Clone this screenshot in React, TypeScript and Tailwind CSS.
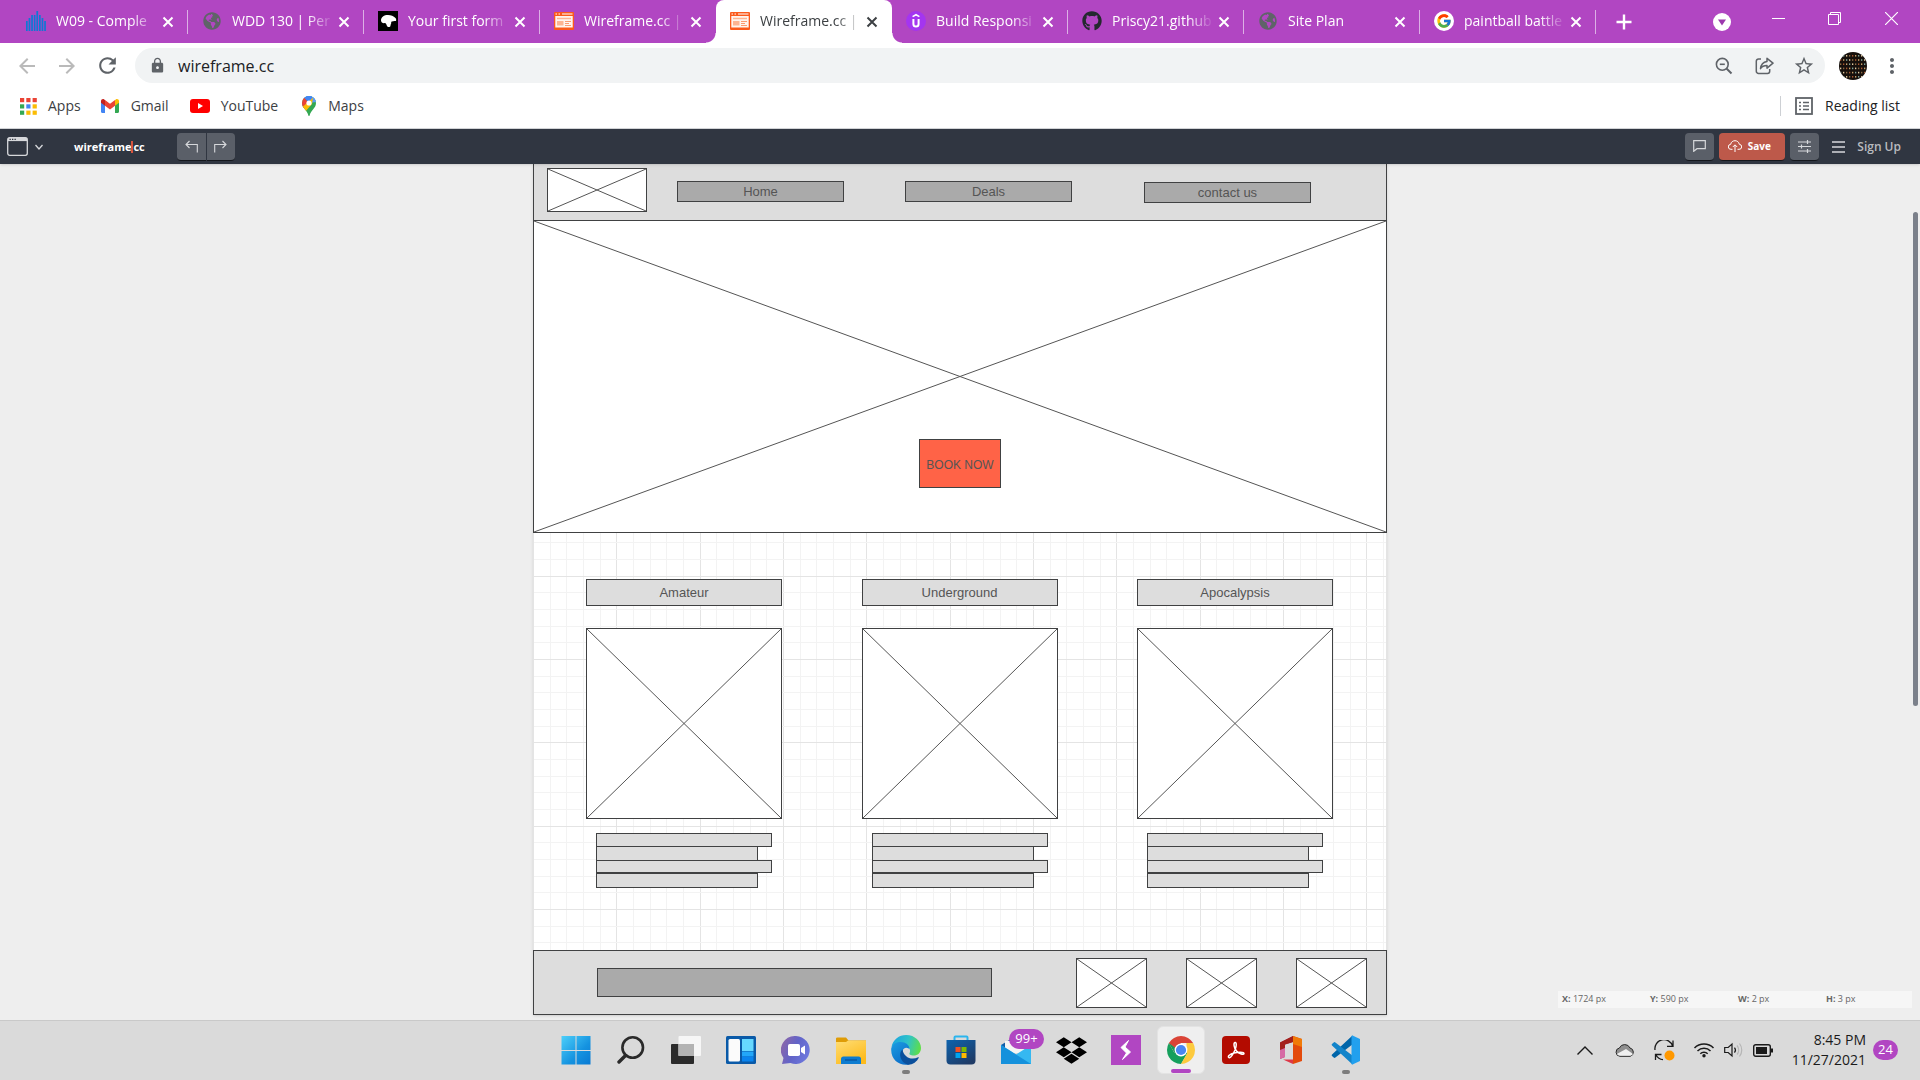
import React from "react";
import { MdArrowBack, MdArrowForward, MdRefresh, MdLock, MdStarBorder, MdMoreVert } from "react-icons/md";
import { FaGithub, FaDropbox, FaGlobeAmericas } from "react-icons/fa";
import { FcGoogle } from "react-icons/fc";

/* ---------- Favicons ---------- */

function BarsIcon() {
  const tops = [10, 7, 4, 4, 0, 4, 7, 10, 11];
  return (
    <svg width="20" height="20" viewBox="0 0 20 20" aria-hidden="true">
      {tops.slice(0, 8).map((t, i) => (
        <rect key={i} x={i * 2.6} y={t} width="1.700" height={20 - t} fill="#0f78d4" />
      ))}
    </svg>
  );
}

function FormIcon() {
  return (
    <svg width="20" height="20" viewBox="0 0 20 20" aria-hidden="true">
      <rect width="20" height="20" fill="#000" />
      <path d="M3 9.500c0-3.500 3-5.500 7-5.500 3 0 5.500 1 7.500 3 .8.800.8 2 .5 3-2 0-4 0-5 1 1 1-.5 2-.5 3.500 0 1.500-2.500 2.500-3.500.5-.7-1.300-.5-2.500-2-3-2 .5-4-.5-4-2.500z" fill="#fff" />
    </svg>
  );
}

function WireframeIcon() {
  return (
    <svg width="20" height="18" viewBox="0 0 20 18" aria-hidden="true">
      <rect x="0" y="0" width="20" height="18" rx="1" fill="#fb5a1c" />
      <path d="M1.500 2h1.500M4.500 2h1.500M8 2h10.500" stroke="#fff" strokeWidth="1" />
      <rect x="1.300" y="4" width="17.400" height="11.500" fill="#fff4ee" />
      <path d="M3 6.500h14" stroke="#fdb492" strokeWidth="1.500" />
      <rect x="3" y="9" width="6.500" height="4.500" fill="#fdb492" />
      <path d="M11 9.500h6M11 11.500h4M11 13.500h6" stroke="#fb9a70" strokeWidth="1" />
    </svg>
  );
}

function UIcon() {
  return (
    <svg width="20" height="20" viewBox="0 0 20 20" aria-hidden="true">
      <circle cx="10" cy="10" r="10" fill="#a435f0" />
      <path d="M6.600 5.600L10 3.700l3.400 1.900" fill="none" stroke="#fff" strokeWidth="1.600" />
      <path d="M7.400 8v5a2.600 2.600 0 005.200 0V8" fill="none" stroke="#fff" strokeWidth="2" />
    </svg>
  );
}

/* ---------- Browser tabs ---------- */

type TabInfo = { title: string; icon: React.ReactNode; active?: boolean; noSeparator?: boolean };

const globe = <FaGlobeAmericas size={18} color="#5f6368" />;

const tabs: TabInfo[] = [
  { title: "W09 - Comple", icon: <BarsIcon /> },
  { title: "WDD 130 | Per", icon: globe },
  { title: "Your first form", icon: <FormIcon /> },
  { title: "Wireframe.cc |", icon: <WireframeIcon />, noSeparator: true },
  { title: "Wireframe.cc |", icon: <WireframeIcon />, active: true, noSeparator: true },
  { title: "Build Responsi", icon: <UIcon /> },
  { title: "Priscy21.github", icon: <FaGithub size={20} color="#24292f" /> },
  { title: "Site Plan", icon: globe },
  {
    title: "paintball battle",
    icon: (
      <span className="flex size-5 items-center justify-center rounded-full bg-white">
        <FcGoogle size={16} />
      </span>
    ),
  },
];

function Tab({ title, icon, active, noSeparator }: TabInfo) {
  return (
    <div
      className={
        active
          ? "relative flex h-full w-44 shrink-0 items-center rounded-t-lg bg-white text-[#3c4043]"
          : "flex h-full w-44 shrink-0 items-center text-white"
      }
    >
      {active && (
        <>
          <span className="absolute bottom-0 -left-2.5 size-2.5 bg-[radial-gradient(circle_at_0_0,transparent_9px,#fff_10px)]" />
          <span className="absolute bottom-0 -right-2.5 size-2.5 bg-[radial-gradient(circle_at_100%_0,transparent_9px,#fff_10px)]" />
        </>
      )}
      <button className="flex min-w-0 flex-1 items-center gap-2.5 pb-0.5 pl-3.5">
        <span className="flex size-5 shrink-0 items-center justify-center">{icon}</span>
        <span className="w-[102px] text-left text-sm whitespace-nowrap [mask-image:linear-gradient(to_right,#000_74%,transparent)]">
          {title}
        </span>
      </button>
      <button aria-label={`Close ${title}`} className="mr-1 flex h-5 w-4 shrink-0 items-center justify-center">
        <svg width="12" height="12" viewBox="0 0 12 12" stroke="currentColor" strokeWidth="2">
          <path d="M1.500 1.500l9 9M10.500 1.500l-9 9" />
        </svg>
      </button>
      <span className={noSeparator ? "ml-[7px] h-6 w-px" : "ml-[7px] h-6 w-px bg-[#dcb0e5]"} />
    </div>
  );
}

function TabStrip() {
  return (
    <div className="flex h-[43px] bg-[#b146c2] pl-3">
      {tabs.map((t, i) => (
        <Tab key={i} {...t} />
      ))}
      <button aria-label="New tab" className="ml-5 flex items-center text-white">
        <svg width="16" height="16" viewBox="0 0 16 16" stroke="currentColor" strokeWidth="2.400">
          <path d="M8 0.500v15M0.500 8h15" />
        </svg>
      </button>
      <div className="ml-auto flex text-white">
        <button aria-label="Search tabs" className="flex w-14 items-center justify-center">
          <svg width="18" height="18" viewBox="0 0 18 18">
            <circle cx="9" cy="9" r="9" fill="#fff" />
            <path d="M5 6.500h8L9 12.500z" fill="#9c38ad" />
          </svg>
        </button>
        <button aria-label="Minimize" className="flex w-14 justify-center pt-3">
          <svg width="13" height="13" viewBox="0 0 13 13" stroke="currentColor" fill="none">
            <path d="M0 6.500h13" />
          </svg>
        </button>
        <button aria-label="Restore" className="flex w-14 justify-center pt-3">
          <svg width="13" height="13" viewBox="0 0 13 13" stroke="currentColor" fill="none">
            <path d="M0.500 2.500h10v10h-10zM2.500 2.500v-2h10v10h-2" />
          </svg>
        </button>
        <button aria-label="Close window" className="flex w-[58px] justify-center pt-3">
          <svg width="13" height="13" viewBox="0 0 13 13" stroke="currentColor" fill="none" strokeWidth="1.200">
            <path d="M0 0l13 13M13 0L0 13" />
          </svg>
        </button>
      </div>
    </div>
  );
}

/* ---------- Address bar ---------- */

function Avatar() {
  const lamps: React.ReactNode[] = [];
  const colors = ["#c9a26a", "#e0c9a0", "#a8552f", "#7fa39b", "#8d6a45"];
  for (let r = 0; r < 6; r++) {
    for (let c = 0; c < 9; c++) {
      lamps.push(<rect key={`${r}-${c}`} x={1 + c * 3} y={3 + r * 4.2} width="1.300" height="1.600" fill={colors[(r * 7 + c * 3) % 5]} />);
    }
  }
  return (
    <svg width="28" height="28" viewBox="0 0 28 28" className="rounded-full bg-[#17100c]" aria-hidden="true">
      {lamps}
    </svg>
  );
}

function AddressBar() {
  return (
    <div className="flex h-[45px] items-center bg-white pl-[7px] text-[#5f6368]">
      <button aria-label="Back" className="flex w-10 justify-center text-[#bababa]">
        <MdArrowBack size={24} />
      </button>
      <button aria-label="Forward" className="flex w-10 justify-center text-[#bababa]">
        <MdArrowForward size={24} />
      </button>
      <button aria-label="Reload" className="flex w-10 justify-center">
        <MdRefresh size={25} />
      </button>
      <div className="ml-2 flex h-[35px] flex-1 items-center rounded-full bg-[#f1f3f4] pr-px">
        <MdLock size={17} className="ml-3.5" />
        <input
          aria-label="Address"
          defaultValue="wireframe.cc"
          className="ml-3 min-w-0 flex-1 bg-transparent text-base text-[#202124] outline-none"
        />
        <button aria-label="Zoom" className="flex w-10 justify-center">
          <svg width="18" height="18" viewBox="0 0 18 18" fill="none" stroke="currentColor" strokeWidth="1.600">
            <circle cx="7.300" cy="7.300" r="5.900" />
            <path d="M11.500 11.500l5 5" strokeWidth="2" />
            <path d="M4.800 7.300h5" />
          </svg>
        </button>
        <button aria-label="Share" className="flex w-10 justify-center">
          <svg width="19" height="18" viewBox="0 0 19 18" fill="none" stroke="currentColor" strokeWidth="1.500" strokeLinejoin="round">
            <path d="M6 2H3.500A2.200 2.200 0 001.300 4.200v10a2.200 2.200 0 002.200 2.200h9a2.200 2.200 0 002.200-2.200V12" />
            <path d="M12 1.300l6 4.900-6 4.900V8.600c-3 0-5 .8-6.500 3 .4-3.800 2.700-6.600 6.500-7.200z" />
          </svg>
        </button>
        <button aria-label="Bookmark this page" className="flex w-10 justify-center">
          <MdStarBorder size={22} />
        </button>
      </div>
      <button aria-label="Profile" className="ml-3.5">
        <Avatar />
      </button>
      <button aria-label="Menu" className="mr-4 ml-[13px] flex w-6 justify-center">
        <MdMoreVert size={24} />
      </button>
    </div>
  );
}

/* ---------- Bookmarks ---------- */

function AppsGrid() {
  const c = ["#ea4335", "#ea4335", "#ea4335", "#34a853", "#4285f4", "#fbbc04", "#34a853", "#fbbc04", "#fbbc04"];
  return (
    <svg width="17" height="17" viewBox="0 0 17 17" aria-hidden="true">
      {c.map((f, i) => (
        <rect key={i} x={(i % 3) * 6.3} y={Math.floor(i / 3) * 6.3} width="4.200" height="4.200" fill={f} />
      ))}
    </svg>
  );
}

function GmailIcon() {
  return (
    <svg width="18" height="14" viewBox="0 0 18 14" aria-hidden="true">
      <path d="M0 2v10.800C0 13.500.5 14 1.200 14H4V5z" fill="#4285f4" />
      <path d="M18 2v10.800c0 .7-.5 1.200-1.200 1.200H14V5z" fill="#34a853" />
      <path d="M14 .9V6.800l4-3V2c0-1.600-1.800-2.500-3.200-1.600z" fill="#fbbc04" />
      <path d="M4 6.800V1l5 3.700L14 1v5.800l-5 3.700z" fill="#ea4335" />
      <path d="M0 2v1.800l4 3V.9L3.200.4C1.800-.5 0 .4 0 2z" fill="#c5221f" />
    </svg>
  );
}

function YouTubeIcon() {
  return (
    <svg width="20" height="14" viewBox="0 0 20 14" aria-hidden="true">
      <rect width="20" height="14" rx="3" fill="#f00" />
      <path d="M8 4v6l5-3z" fill="#fff" />
    </svg>
  );
}

function MapsIcon() {
  return (
    <svg width="14" height="20" viewBox="0 0 14 20" aria-hidden="true">
      <defs>
        <clipPath id="pin">
          <path d="M7 0a7 7 0 00-7 7c0 3 1.500 4.600 3 6.500C4.800 15.800 5.800 17 6.300 19.300c.2 1 1.200 1 1.400 0C8.200 17 9.200 15.800 11 13.500c1.500-1.900 3-3.500 3-6.500a7 7 0 00-7-7z" />
        </clipPath>
      </defs>
      <g clipPath="url(#pin)">
        <rect width="14" height="20" fill="#34a853" />
        <path d="M0 0h14v5L9 5 2 3z" fill="#4285f4" />
        <path d="M10 0l4 3v3L7 7z" fill="#5a9bf6" />
        <path d="M0 2l2.500 0L7 7l-6 6-1-2z" fill="#ea4335" />
        <path d="M0 11.500L11 1.500 10 8l-7 8z" fill="#fbbc04" />
        <path d="M2 1L10-2v4L6 6z" fill="#4285f4" />
      </g>
      <circle cx="7" cy="7" r="2.600" fill="#fff" />
    </svg>
  );
}

function Bookmarks() {
  return (
    <div className="flex h-[41px] items-center border-b border-[#d5d7da] bg-white pr-5 pb-1 pl-5 text-sm text-[#3c4043]">
      <a href="#apps" className="flex items-center gap-[11px]">
        <AppsGrid />
        Apps
      </a>
      <a href="#gmail" className="ml-5 flex items-center gap-3">
        <GmailIcon />
        Gmail
      </a>
      <a href="#youtube" className="ml-[21px] flex items-center gap-[11px]">
        <YouTubeIcon />
        YouTube
      </a>
      <a href="#maps" className="ml-6 flex items-center gap-3">
        <MapsIcon />
        Maps
      </a>
      <span className="ml-auto h-5 w-px bg-[#cdd0d4]" />
      <button className="ml-3.5 flex items-center gap-3 text-[#202124]">
        <svg width="18" height="18" viewBox="0 0 18 18" fill="none" stroke="#5f6368" strokeWidth="1.800" aria-hidden="true">
          <rect x="1" y="1" width="16" height="16" />
          <path d="M4 5.500h2M8 5.500h6M4 9h2M8 9h6M4 12.500h2M8 12.500h6" strokeWidth="1.500" />
        </svg>
        Reading list
      </button>
    </div>
  );
}

/* ---------- Wireframe editor bar ---------- */

const toolButton = "flex h-7 items-center justify-center border-b border-[#14171c] bg-[#5a5f68] text-[#d6d8db]";

function EditorBar() {
  return (
    <div className="relative z-10 flex h-[35px] items-center bg-[#303641] pr-[19px] pl-[7px] text-[#d6d8db] shadow-sm">
      <button aria-label="Device" className="flex items-center gap-[7px]">
        <svg width="21" height="19" viewBox="0 0 21 19" fill="none" stroke="currentColor" strokeWidth="1.300">
          <rect x="0.700" y="0.700" width="19.600" height="17.600" rx="2" />
          <path d="M1 2.500h19" strokeWidth="3.200" />
          <path d="M2.500 2.300h1.300M5 2.300h1.300M7.500 2.300h1.300" stroke="#303641" />
        </svg>
        <svg width="8" height="6" viewBox="0 0 8 6" fill="none" stroke="currentColor" strokeWidth="1.300">
          <path d="M0.500 1L4 5l3.500-4" />
        </svg>
      </button>
      <a href="#home" className="ml-[31px] flex text-[11px] leading-3 font-bold text-white">
        wireframe
        <span className="w-0.5 bg-[#d9553f]" />
        cc
      </a>
      <div className="ml-8 flex gap-px">
        <button aria-label="Undo" className={`${toolButton} w-[29px] rounded-l`}>
          <svg width="13" height="13" viewBox="0 0 13 13" fill="none" stroke="currentColor" strokeWidth="1.100">
            <path d="M4.500 1L1 4.500 4.500 8M1 4.500h11.300V12.500" />
          </svg>
        </button>
        <button aria-label="Redo" className={`${toolButton} w-7 rounded-r`}>
          <svg width="13" height="13" viewBox="0 0 13 13" fill="none" stroke="currentColor" strokeWidth="1.100">
            <path d="M8.500 1L12 4.500 8.500 8M12 4.500H0.700V12.500" />
          </svg>
        </button>
      </div>
      <div className="ml-auto flex items-center gap-[5px]">
        <button aria-label="Comments" className={`${toolButton} w-[29px] rounded`}>
          <svg width="13" height="12" viewBox="0 0 13 12" fill="none" stroke="currentColor" strokeWidth="1.200">
            <path d="M0.700 0.700h11.600v8H4L0.700 11.300z" />
          </svg>
        </button>
        <button className="flex h-7 w-[66px] items-center justify-center gap-1.5 rounded border-b border-[#14171c] bg-[#bd594a] pr-1.5 text-[10px] font-bold text-white">
          <svg width="14" height="12" viewBox="0 0 14 12" fill="none" stroke="currentColor">
            <path d="M4.500 9.300H3a2.500 2.500 0 01-.3-5C3 2 5 .7 7 .7s4 1.300 4.300 3.600a2.500 2.500 0 01-.3 5H9.500M7 12V5M4.800 7L7 4.800 9.200 7" />
          </svg>
          Save
        </button>
        <button aria-label="Settings" className={`${toolButton} w-[29px] rounded`}>
          <svg width="13" height="13" viewBox="0 0 13 13" fill="none" stroke="currentColor" strokeWidth="1.200">
            <path d="M0 2h13M0 6.500h13M0 11h13M9.500 0v4M3.500 4.500v4M9.500 9v4" />
          </svg>
        </button>
        <button aria-label="Menu" className="ml-2">
          <svg width="13" height="12" viewBox="0 0 13 12" stroke="currentColor" strokeWidth="1.400">
            <path d="M0 1h13M0 6h13M0 11h13" />
          </svg>
        </button>
        <a href="#signup" className="ml-[7px] text-xs font-semibold text-[#b9bbbf]">
          Sign Up
        </a>
      </div>
    </div>
  );
}

/* ---------- Wireframe page ---------- */

function Cross() {
  return (
    <svg className="absolute inset-0 size-full" stroke="#555" strokeWidth="1" aria-hidden="true">
      <line x1="0" y1="0" x2="100%" y2="100%" />
      <line x1="0" y1="100%" x2="100%" y2="0" />
    </svg>
  );
}

function ImageBox({ className }: { className: string }) {
  return (
    <div className={`relative border border-[#404142] bg-white ${className}`}>
      <Cross />
    </div>
  );
}

function GridLines() {
  const cols = Array.from({ length: 51 }, (_, i) => i + 1);
  const rows = Array.from({ length: 25 }, (_, i) => i);
  return (
    <svg className="absolute inset-0 size-full" shapeRendering="crispEdges" aria-hidden="true">
      {cols.map((i) => (
        <rect key={`c${i}`} x={Math.round((i * 50) / 3) - 1} y="0" width="1" height="100%" fill={i % 5 ? "#f3f3f3" : "#e4e4e4"} />
      ))}
      {rows.map((i) => (
        <rect key={`r${i}`} x="0" y={Math.round(9.3 + (i * 50) / 3)} width="100%" height="1" fill={i % 5 === 2 ? "#e4e4e4" : "#f3f3f3"} />
      ))}
    </svg>
  );
}

const navBox = "flex h-[21px] w-[167px] items-center justify-center border border-[#404142] bg-[#aaa]";
const textLine = "border border-[#404142] bg-[#ddd]";

function Column({ title }: { title: string }) {
  return (
    <div className="flex w-[196px] flex-col">
      <h2 className="flex h-[27px] items-center justify-center border border-[#404142] bg-[#ddd]">{title}</h2>
      <ImageBox className="mt-[22px] h-[191px]" />
      <div className="mt-3.5 ml-2.5 flex flex-col">
        <div className={`${textLine} h-3.5 w-44`} />
        <div className={`${textLine} -mt-px h-[15px] w-[162px]`} />
        <div className={`${textLine} -mt-px h-[13px] w-44`} />
        <div className={`${textLine} h-[15px] w-[162px]`} />
      </div>
    </div>
  );
}

function Wireframe() {
  return (
    <div className="mx-auto flex w-[854px] flex-col bg-white font-['Liberation_Sans',Arial,sans-serif] text-[13px] text-[#555] shadow-sm">
      <nav className="flex h-14 items-start border-x border-[#404142] bg-[#ddd] pl-[13px]">
        <ImageBox className="mt-1 h-11 w-[100px]" />
        <button className={`${navBox} mt-[17px] ml-[30px]`}>Home</button>
        <button className={`${navBox} mt-[17px] ml-[61px]`}>Deals</button>
        <button className={`${navBox} mt-[18px] ml-[72px]`}>contact us</button>
      </nav>
      <div className="relative flex h-[313px] justify-center border border-[#404142] bg-white pt-[218px]">
        <Cross />
        <button className="relative h-[49px] w-[82px] border border-[#404142] bg-[#ff6347] pt-0.5 text-xs whitespace-nowrap">BOOK NOW</button>
      </div>
      <div className="relative border-x border-[#e4e4e4]">
        <GridLines />
        <div className="relative flex justify-between pt-[46px] pr-[53px] pb-[62px] pl-[52px]">
          <Column title="Amateur" />
          <Column title="Underground" />
          <Column title="Apocalypsis" />
        </div>
      </div>
      <div className="flex h-[65px] items-center border border-[#404142] bg-[#ddd] pl-[63px]">
        <div className="h-[29px] w-[395px] border border-[#404142] bg-[#aaa]" />
        <div className="ml-[84px] flex gap-[39px]">
          <ImageBox className="h-[50px] w-[71px]" />
          <ImageBox className="h-[50px] w-[71px]" />
          <ImageBox className="h-[50px] w-[71px]" />
        </div>
      </div>
    </div>
  );
}

function StatusBox() {
  const items = [
    ["X:", "1724 px"],
    ["Y:", "590 px"],
    ["W:", "2 px"],
    ["H:", "3 px"],
  ];
  return (
    <div className="absolute right-2 bottom-3 grid h-[17px] w-[354px] grid-cols-[repeat(4,88px)] items-center bg-[#f6f6f6] pb-0.5 pl-1 text-[9px] leading-3 text-[#666]">
      {items.map(([k, v]) => (
        <span key={k}>
          <b>{k}</b> {v}
        </span>
      ))}
    </div>
  );
}

/* ---------- Taskbar ---------- */

function StartIcon() {
  return (
    <svg width="30" height="30" viewBox="0 0 30 30">
      <defs>
        <linearGradient id="win" gradientUnits="userSpaceOnUse" x1="0" y1="0" x2="30" y2="30">
          <stop offset="0" stopColor="#4fd2fb" />
          <stop offset="0.600" stopColor="#1593e0" />
          <stop offset="1" stopColor="#0878d2" />
        </linearGradient>
      </defs>
      <path d="M0.500 1h14v14h-14zM15.500 1h14v14h-14zM0.500 16h14v13.500h-14zM15.500 16h14v13.500h-14z" fill="url(#win)" />
    </svg>
  );
}

function SearchIcon() {
  return (
    <svg width="28" height="30" viewBox="0 0 28 30" fill="none" stroke="#2a2a2a" strokeWidth="2.600" strokeLinecap="round">
      <circle cx="15.700" cy="12.500" r="10.300" />
      <path d="M8.500 20.500L2 27" strokeWidth="3.400" />
    </svg>
  );
}

function TaskViewIcon() {
  return (
    <svg width="30" height="30" viewBox="0 0 30 30">
      <rect x="0" y="9" width="23" height="20" rx="1" fill="#2b2b2b" />
      <rect x="7.500" y="1" width="22.500" height="20" rx="1" fill="#f6f6f6" />
      <rect x="7.500" y="9" width="15.500" height="12" fill="#b3b3b3" />
    </svg>
  );
}

function WidgetsIcon() {
  return (
    <svg width="30" height="28" viewBox="0 0 30 28">
      <rect width="30" height="28" rx="1.500" fill="#0a5aa8" />
      <rect x="2.500" y="3" width="11.500" height="22.500" rx="1.500" fill="#fbfbfb" />
      <path d="M16 3h11.500v12H16z" fill="#66d8ff" />
      <path d="M16 15.500h11.500v5H16z" fill="#22a7f9" />
      <path d="M16 20.500h11.500v5H16z" fill="#0a84ee" />
    </svg>
  );
}

function ChatIcon() {
  return (
    <svg width="30" height="30" viewBox="0 0 30 30">
      <defs>
        <linearGradient id="chat" x1="0" y1="0.200" x2="1" y2="0.600">
          <stop offset="0" stopColor="#8e67a8" />
          <stop offset="0.500" stopColor="#6264c8" />
          <stop offset="1" stopColor="#6d78dd" />
        </linearGradient>
      </defs>
      <path d="M15 1a14 14 0 11-5.500 27L1 29l1.500-6A14 14 0 0115 1z" fill="url(#chat)" />
      <rect x="7" y="9" width="12" height="12" rx="1.800" fill="#fff" />
      <path d="M20 13l4-2.500v9L20 17z" fill="#fff" />
    </svg>
  );
}

function FolderIcon() {
  return (
    <svg width="30" height="27" viewBox="0 0 30 27">
      <defs>
        <linearGradient id="fold" x1="0" y1="0" x2="0.600" y2="1">
          <stop offset="0" stopColor="#ffdd75" />
          <stop offset="1" stopColor="#fdbb1d" />
        </linearGradient>
      </defs>
      <path d="M0 1.500Q0 .5 1.500.5H10l2.500 3H30V12H0z" fill="#df9c06" />
      <path d="M0 5h10l2-1.500h18V27H0z" fill="url(#fold)" />
      <path d="M5 27v-5q0-2.500 2.500-2.500h15q2.500 0 2.500 2.500v5z" fill="#0e7cd0" />
      <path d="M9 23h12" stroke="#0a58a5" strokeWidth="1.500" />
    </svg>
  );
}

function EdgeIcon() {
  return (
    <svg width="30" height="30" viewBox="0 0 30 30">
      <defs>
        <linearGradient id="edgeTop" x1="0" y1="0.500" x2="1" y2="0.700">
          <stop offset="0" stopColor="#1ca5de" />
          <stop offset="0.500" stopColor="#2fc3c8" />
          <stop offset="1" stopColor="#62e03f" />
        </linearGradient>
        <linearGradient id="edgeLeft" x1="0" y1="0" x2="0.600" y2="1">
          <stop offset="0" stopColor="#1b9de2" />
          <stop offset="1" stopColor="#0c6dc8" />
        </linearGradient>
      </defs>
      <path d="M0.500 12C2 4.500 8 0 15.200 0 24 0 30 6.500 30 13c0 5-3.600 7.500-7.200 7.500-3.300 0-5-1.300-4.300-2.300 1.400-2 .6-7.200-4.500-7.200-7 0-8-4-13.500 1z" fill="url(#edgeTop)" />
      <path d="M0.300 13C2 8.500 6 7 9.500 7c5.500 0 9.300 3.500 9 7.500-1-2.500-6.500-3-7 2C11 22 15 28 19 29.200 10 32-1 25.500 0.300 13z" fill="url(#edgeLeft)" />
      <path d="M11.500 14.500C7 18 9 27.500 17 29.800c5 0 9-3.300 10.800-7 .3-.6-.2-.8-.7-.5-7 3.500-14.600-.5-15.600-7.800z" fill="#0b4f9c" />
    </svg>
  );
}

function StoreIcon() {
  return (
    <svg width="30" height="30" viewBox="0 0 30 30">
      <defs>
        <linearGradient id="store" x1="0" y1="0" x2="0.700" y2="1">
          <stop offset="0" stopColor="#0d63ae" />
          <stop offset="1" stopColor="#1f3b66" />
        </linearGradient>
      </defs>
      <path d="M8.500 6V2.500q0-1 1-1h11q1 0 1 1V6" fill="none" stroke="#2bb5ee" strokeWidth="2" />
      <path d="M0.500 5h29v20.500q0 4-4 4h-21q-4 0-4-4z" fill="url(#store)" />
      <path d="M9.500 12h5v5h-5z" fill="#f25022" />
      <path d="M15.500 12h5v5h-5z" fill="#7fba00" />
      <path d="M9.500 18h5v5h-5z" fill="#00a4ef" />
      <path d="M15.500 18h5v5h-5z" fill="#ffb900" />
    </svg>
  );
}

function MailIcon() {
  return (
    <svg width="30" height="28" viewBox="0 0 30 28">
      <path d="M0 9L15 0l15 9v4H0z" fill="#0f5da8" />
      <path d="M4 5h22v12H4z" fill="#f4f4f4" />
      <path d="M0 9l15 9.500L30 9v19H0z" fill="#35b8f1" />
      <path d="M0 9l30 19H0z" fill="#1591dc" />
    </svg>
  );
}

function BoltIcon() {
  return (
    <svg width="30" height="30" viewBox="0 0 30 30">
      <rect width="30" height="30" fill="#b146c2" />
      <path d="M17.500 5.500L10 12.500l5.500 5.500-4 6.500 8-7.500-5.500-5z" fill="#fff" stroke="#fff" strokeWidth="1" />
    </svg>
  );
}

function ChromeIcon() {
  return (
    <svg width="28" height="28" viewBox="0 0 28 28">
      <path d="M1.880 7A14 14 0 0014 28l6.500-11L14 14 7.500 17z" fill="#159f5c" />
      <path d="M26.120 7A14 14 0 0114 28l6-10.500L19.500 8V7z" fill="#fdca3e" />
      <path d="M1.880 7A14 14 0 0126.120 7H14L8 17z" fill="#da4437" />
      <path d="M1.880 7L8 17.500 11 14z" fill="#159f5c" />
      <circle cx="14" cy="14" r="6.400" fill="#fff" />
      <circle cx="14" cy="14" r="5.100" fill="#4a87f2" />
    </svg>
  );
}

function AcrobatIcon() {
  return (
    <svg width="28" height="28" viewBox="0 0 28 28">
      <rect width="28" height="28" rx="4" fill="#b30b00" />
      <path
        d="M7 21.500c-2-1 1-3.500 5-4.500s10-1.200 10 .5-5 .5-7.500-2.500-3.300-8-1.500-8.500 1.500 4 0 7.500-4.300 8.500-6 7.500z"
        fill="none"
        stroke="#fff"
        strokeWidth="1.500"
      />
    </svg>
  );
}

function OfficeIcon() {
  return (
    <svg width="24" height="30" viewBox="0 0 24 30">
      <path d="M1 7.500L14 1v6L6 9.500V22l-5 2z" fill="#a8324f" />
      <path d="M1 14l5-2v10l-5 2z" fill="#d66aa4" />
      <path d="M1 7.500L14 1v6L6 9.500V13l-5 2z" fill="#a3201c" />
      <path d="M14 1l9 3v22l-9 3z" fill="#e34a0c" />
      <path d="M14 1l9 3v8l-9-3z" fill="#f07a08" />
      <path d="M4 24.500h10V29z" fill="#dd3848" />
    </svg>
  );
}

function CodeIcon() {
  return (
    <svg width="30" height="30" viewBox="0 0 30 30">
      <path d="M21.500 0.500L1 19.500q-.8.800 0 1.600l1.700 1.500q.8.700 1.700 0L22 9z" fill="#0065a9" />
      <path d="M21.500 29.500L1 10.500q-.8-.8 0-1.600l1.700-1.500q.8-.7 1.700 0L22 21z" fill="#1284ca" />
      <path d="M21.500 0.500L29 4v22l-7.500 3.500q-1 .3-1-1V1.500q0-1.300 1-1z" fill="#22a0ee" />
    </svg>
  );
}

type AppEntry = { label: string; icon: React.ReactNode; mark?: "open" | "current"; badge?: string };

const apps: AppEntry[] = [
  { label: "Start", icon: <StartIcon /> },
  { label: "Search", icon: <SearchIcon /> },
  { label: "Task view", icon: <TaskViewIcon /> },
  { label: "Widgets", icon: <WidgetsIcon /> },
  { label: "Chat", icon: <ChatIcon /> },
  { label: "File Explorer", icon: <FolderIcon /> },
  { label: "Edge", icon: <EdgeIcon />, mark: "open" },
  { label: "Store", icon: <StoreIcon /> },
  { label: "Mail", icon: <MailIcon />, badge: "99+" },
  { label: "Dropbox", icon: <FaDropbox size={31} color="#000" /> },
  { label: "Shortcuts", icon: <BoltIcon /> },
  { label: "Chrome", icon: <ChromeIcon />, mark: "current" },
  { label: "Acrobat", icon: <AcrobatIcon /> },
  { label: "Office", icon: <OfficeIcon /> },
  { label: "Code", icon: <CodeIcon />, mark: "open" },
];

function Taskbar() {
  return (
    <footer className="grid h-[60px] grid-cols-[1fr_auto_1fr] items-center border-t border-[#c9c9c9] bg-[#dadada] pb-px">
      <span />
      <div className="flex gap-[7px] pl-0.5">
        {apps.map((a) => (
          <button
            key={a.label}
            aria-label={a.label}
            className={
              a.mark === "current"
                ? "relative flex size-12 items-center justify-center rounded-md border border-[#e3e3e3] bg-[#efefef]"
                : "relative flex size-12 items-center justify-center"
            }
          >
            {a.icon}
            {a.badge && (
              <span className="absolute top-[3px] -right-1 flex h-5 w-[35px] items-center justify-center rounded-full bg-[#b146c2] text-[13px] text-white">
                {a.badge}
              </span>
            )}
            {a.mark === "open" && <span className="absolute bottom-0 h-1 w-2 rounded-full bg-[#7d7d7d]" />}
            {a.mark === "current" && <span className="absolute bottom-0 h-1 w-5 rounded-full bg-[#b146c2]" />}
          </button>
        ))}
      </div>
      <div className="flex items-center justify-end pr-[22px] text-[#1a1a1a]">
        <button aria-label="Show hidden icons" className="flex w-10 justify-center">
          <svg width="16" height="9" viewBox="0 0 16 9" fill="none" stroke="currentColor" strokeWidth="1.400">
            <path d="M0.500 8.500L8 1l7.500 7.500" />
          </svg>
        </button>
        <button aria-label="OneDrive" className="flex w-10 justify-center">
          <svg width="20" height="14" viewBox="0 0 20 14">
            <path d="M5 13.300a4.200 4.200 0 01-.6-8.300A5.800 5.800 0 0115 5a4.300 4.300 0 01.3 8.300z" fill="#8f8f8f" stroke="#2a2a2a" />
            <path d="M1.800 11L11 6l7 5q-1 1.800-3 1.800H5q-2 0-3.200-1.800z" fill="#f0f0f0" />
          </svg>
        </button>
        <button aria-label="Update" className="flex w-10 justify-center">
          <svg width="21" height="21" viewBox="0 0 21 21" fill="none" stroke="currentColor" strokeWidth="1.300">
            <path d="M1 10A9 9 0 0118.500 6M19 0.500V6.300h-6M1.500 20v-5.500h6M2 15a9 9 0 007 4.700" />
            <circle cx="15.500" cy="15.500" r="5" fill="#ff9800" stroke="none" />
          </svg>
        </button>
        <button aria-label="Network, sound and battery" className="ml-2 flex items-center gap-[9px]">
          <svg width="22" height="16" viewBox="0 0 22 16" fill="none" stroke="currentColor" strokeWidth="1.500">
            <path d="M1.500 6a13.300 13.300 0 0119 0M4.500 9a9.200 9.200 0 0113 0M7.300 11.700a5.300 5.300 0 017.400 0" />
            <circle cx="11" cy="13.800" r="1.700" fill="currentColor" stroke="none" />
          </svg>
          <svg width="20" height="16" viewBox="0 0 20 16" fill="none" stroke="currentColor" strokeWidth="1.200">
            <path d="M0.700 5.500h3.500L8 2v12L4.200 10.500H0.700z" />
            <path d="M10.500 5.500a4 4 0 010 5" />
            <path d="M13 3.500a7 7 0 010 9M15.500 1.500a10.500 10.500 0 010 13" stroke="#b5b5b5" />
          </svg>
          <svg width="20" height="13" viewBox="0 0 20 13" fill="none" stroke="currentColor" strokeWidth="1.400">
            <rect x="0.700" y="0.700" width="16.600" height="11.600" rx="2" />
            <rect x="3" y="3" width="11" height="7" fill="currentColor" stroke="none" />
            <path d="M19 4.500v4" strokeWidth="2" />
          </svg>
        </button>
        <button className="ml-[19px] flex items-center gap-[7px]">
          <span className="pb-px text-right text-sm leading-5">
            8:45 PM
            <br />
            11/27/2021
          </span>
          <span className="flex h-5 w-[25px] items-center justify-center rounded-full bg-[#b146c2] text-[13px] text-white">24</span>
        </button>
      </div>
    </footer>
  );
}

export default function App() {
  return (
    <div className="flex min-h-screen flex-col overflow-hidden bg-[#eee] font-['Open_Sans','Noto_Sans',sans-serif]">
      <TabStrip />
      <AddressBar />
      <Bookmarks />
      <EditorBar />
      <main className="relative flex-1 bg-[#eee]">
        <Wireframe />
        <StatusBox />
        <div className="absolute top-12 right-0.5 h-[494px] w-[5px] rounded-full bg-[#7b808a]" />
      </main>
      <Taskbar />
    </div>
  );
}
